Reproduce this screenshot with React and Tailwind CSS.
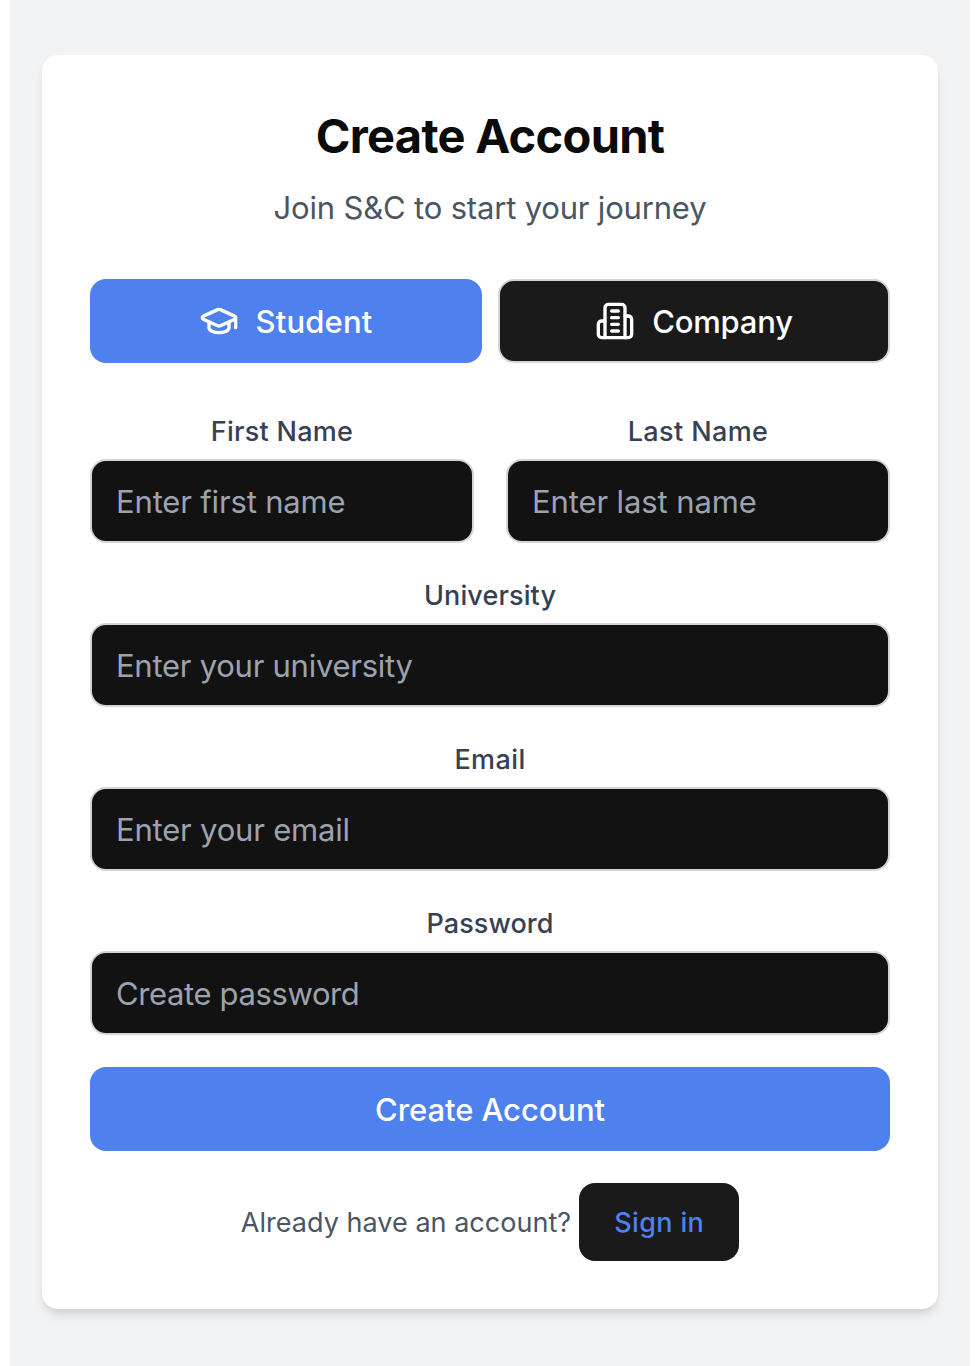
function GraduationCapIcon() {
  return (
    <svg className="size-10 shrink-0" viewBox="0 0 24 24" fill="none" stroke="currentColor" strokeWidth="2" strokeLinecap="round" strokeLinejoin="round" aria-hidden="true">
      <path d="M21.42 10.922a1 1 0 0 0-.019-1.838L12.83 5.18a2 2 0 0 0-1.66 0L2.6 9.08a1 1 0 0 0 0 1.832l8.57 3.908a2 2 0 0 0 1.66 0z" />
      <path d="M22 10v6" />
      <path d="M6 12.5V16a6 3 0 0 0 12 0v-3.5" />
    </svg>
  );
}

function BuildingIcon() {
  return (
    <svg className="size-10 shrink-0" viewBox="0 0 24 24" fill="none" stroke="currentColor" strokeWidth="2" strokeLinecap="round" strokeLinejoin="round" aria-hidden="true">
      <path d="M6 22V4a2 2 0 0 1 2-2h8a2 2 0 0 1 2 2v18Z" />
      <path d="M6 12H4a2 2 0 0 0-2 2v6a2 2 0 0 0 2 2h2" />
      <path d="M18 9h2a2 2 0 0 1 2 2v9a2 2 0 0 1-2 2h-2" />
      <path d="M10 6h4M10 10h4M10 14h4M10 18h4" />
    </svg>
  );
}

function Field({ label, type = "text", placeholder, labelSpacing, inputSpacing }) {
  return (
    <label className="flex min-w-0 flex-col gap-1.5">
      <span className={`text-center text-[27px] leading-[42px] font-medium text-gray-700 ${labelSpacing}`}>{label}</span>
      <input
        type={type}
        placeholder={placeholder}
        className={`h-21 w-full rounded-2xl border-2 border-[#d1d5db] bg-[#121212] px-6 text-[31px] text-white outline-none placeholder:text-[#9ca3af] ${inputSpacing}`}
      />
    </label>
  );
}

export default function App() {
  return (
    <div className="min-h-[1366px] bg-white pr-2 pl-2.5 font-[Inter,sans-serif]">
      <main className="min-h-[1366px] bg-[#f2f3f5] px-8 pt-[55px]">
        <section className="h-[1254px] rounded-2xl bg-white p-12 shadow-[0_8px_12px_-2px_rgba(0,0,0,0.1),0_4px_8px_-4px_rgba(0,0,0,0.1)]">
          <h1 className="text-center text-[47px] leading-[66px] font-bold tracking-[-0.68px] text-[#0a0a0a]">Create Account</h1>
          <p className="mt-3.5 text-center text-[31px] leading-[50px] tracking-[-0.18px] text-[#4b5563]">Join S&amp;C to start your journey</p>

          <div className="mt-[46px] grid grid-cols-2 gap-4">
            <button type="button" className="flex h-21 items-center justify-center gap-4 rounded-2xl bg-[#4f81ee] text-[31px] font-medium tracking-[0.18px] text-white">
              <GraduationCapIcon />
              <span className="pt-0.5">Student</span>
            </button>
            <button type="button" className="flex h-21 items-center justify-center gap-[17px] rounded-2xl border-2 border-[#d1d5db] bg-[#1a1a1a] text-[31px] font-medium tracking-[-0.2px] text-white">
              <BuildingIcon />
              <span className="pt-0.5">Company</span>
            </button>
          </div>

          <form className="mt-12 flex flex-col gap-8">
            <div className="grid grid-cols-2 gap-8">
              <Field label="First Name" placeholder="Enter first name" labelSpacing="tracking-[0.27px]" inputSpacing="tracking-[-0.16px]" />
              <Field label="Last Name" placeholder="Enter last name" labelSpacing="tracking-[0.38px]" inputSpacing="tracking-[-0.11px]" />
            </div>
            <Field label="University" placeholder="Enter your university" labelSpacing="tracking-[0.12px]" inputSpacing="tracking-[-0.26px]" />
            <Field label="Email" type="email" placeholder="Enter your email" labelSpacing="tracking-[0.4px]" inputSpacing="tracking-[-0.2px]" />
            <Field label="Password" type="password" placeholder="Create password" labelSpacing="tracking-[0.08px]" inputSpacing="tracking-[-0.38px]" />
            <button type="button" className="h-21 rounded-2xl bg-[#4f81ee] pt-0.5 text-[31px] font-medium tracking-[-0.09px] text-white">
              Create Account
            </button>
          </form>

          <div className="mt-8 flex items-center justify-center gap-2 text-[27px] leading-10">
            <span className="pt-0.5 tracking-[0.03px] text-[#4b5563]">Already have an account?</span>
            <button type="button" className="h-[78px] w-40 rounded-2xl bg-[#1a1a1a] pt-0.5 font-medium tracking-[0.35px] text-[#4f81ee]">Sign in</button>
          </div>
        </section>
      </main>
    </div>
  );
}
